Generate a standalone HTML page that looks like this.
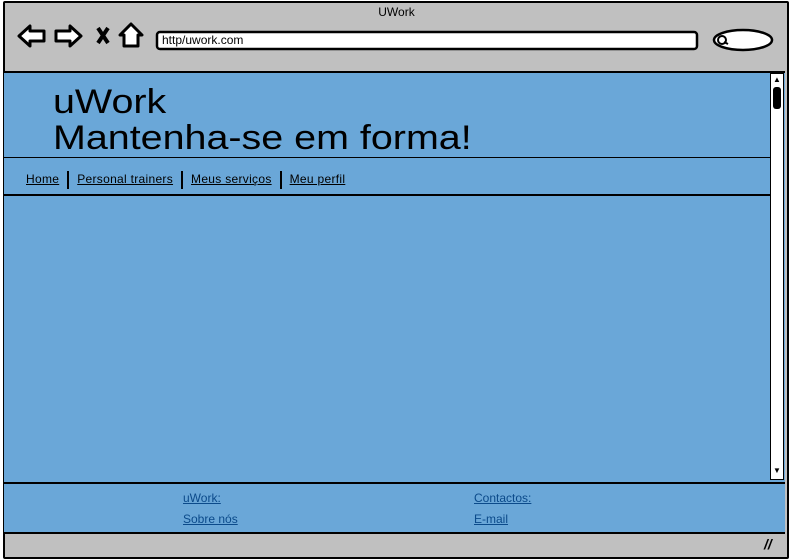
<!DOCTYPE html>
<html><head><style>
body{margin:0;width:793px;height:559px;position:relative;overflow:hidden;background:#fff;font-family:"Liberation Sans",sans-serif}
.a{position:absolute}
.u{text-decoration:underline}
</style></head><body>
<div class="a" style="left:3px;top:1px;width:782px;height:554px;background:#c0c0c0;border:2px solid #000;border-radius:2px"></div>
<div class="a" style="left:0;top:5px;width:793px;text-align:center;font-size:12px">UWork</div>
<svg class="a" style="left:0;top:0" width="793" height="80">
<path d="M19 36 L30 26 L30 31 L44 31 L44 41 L30 41 L30 46 Z" fill="#fff" stroke="#000" stroke-width="3" stroke-linejoin="round"/>
<path d="M81 36 L70 26 L70 31 L56 31 L56 41 L70 41 L70 46 Z" fill="#fff" stroke="#000" stroke-width="3" stroke-linejoin="round"/>
<path d="M98 28 L108 43 M108 28 L98 43" stroke="#000" stroke-width="4"/>
<path d="M131 24 L142 35 L138 35 L138 46 L124 46 L124 35 L120 35 Z" fill="#fff" stroke="#000" stroke-width="3" stroke-linejoin="round"/>
<rect x="157" y="32" width="540" height="17" rx="3" fill="#fff" stroke="#000" stroke-width="2.5"/>
<ellipse cx="743" cy="40" rx="29" ry="10" fill="#fff" stroke="#000" stroke-width="2.5"/>
<circle cx="722" cy="40" r="4" fill="none" stroke="#000" stroke-width="2"/>
<path d="M724 42 L728 44" stroke="#000" stroke-width="2"/>
</svg>
<div class="a" style="left:162px;top:33px;font-size:12px">http/uwork.com</div>
<div class="a" style="left:4px;top:71px;width:781px;height:459px;background:#6aa7d8;border-top:2px solid #000;border-bottom:2px solid #000"></div>
<div class="a" style="left:770px;top:73px;width:14px;height:407px;background:#fff;border:1px solid #000;box-sizing:border-box"></div>
<div class="a" style="left:773px;top:87px;width:8px;height:22px;background:#000;border-radius:3px"></div>
<div class="a" style="left:773px;top:75px;font-size:8px">▲</div>
<div class="a" style="left:773px;top:466px;font-size:8px">▼</div>
<div class="a" style="left:53px;top:84px;font-size:34px;line-height:36px;color:#000;transform:scaleX(1.16);transform-origin:0 0;white-space:nowrap">uWork<br>Mantenha-se em forma!</div>
<div class="a" style="left:4px;top:157px;width:766px;height:1px;background:#000"></div>
<div class="a" style="left:4px;top:194px;width:766px;height:2px;background:#000"></div>
<div class="a" style="left:26px;top:171px;font-size:12px;color:#000;letter-spacing:0.3px;white-space:nowrap">
<span class="u">Home</span><span style="display:inline-block;width:2px;height:18px;background:#000;vertical-align:middle;margin:0 8px"></span><span class="u">Personal trainers</span><span style="display:inline-block;width:2px;height:18px;background:#000;vertical-align:middle;margin:0 8px"></span><span class="u">Meus serviços</span><span style="display:inline-block;width:2px;height:18px;background:#000;vertical-align:middle;margin:0 8px"></span><span class="u">Meu perfil</span></div>
<div class="a" style="left:4px;top:482px;width:781px;height:2px;background:#000"></div>
<div class="a" style="left:183px;top:488px;font-size:12px;color:#0b4a8a;line-height:21px"><span class="u">uWork:</span><br><span class="u">Sobre nós</span></div>
<div class="a" style="left:474px;top:488px;font-size:12px;color:#0b4a8a;line-height:21px"><span class="u">Contactos:</span><br><span class="u">E-mail</span></div>
<div class="a" style="left:764px;top:536px;font-size:14px;font-weight:bold;font-style:italic">//</div>
</body></html>
